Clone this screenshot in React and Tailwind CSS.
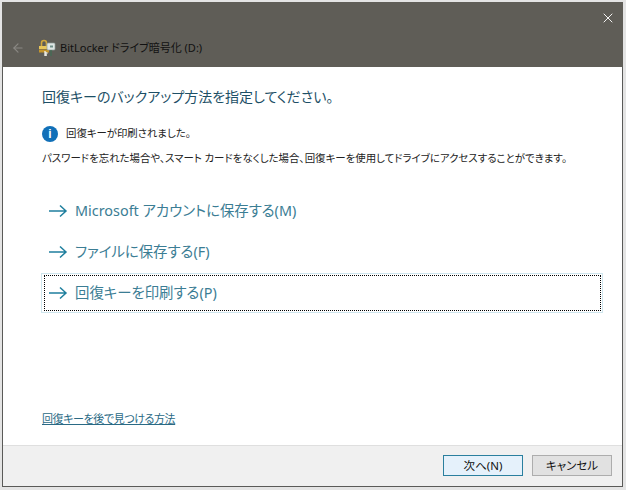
import { ArrowLeft, X } from "lucide-react";

const FONT = "font-['Noto_Sans','Noto_Sans_CJK_JP',sans-serif] [font-feature-settings:'palt']";

function LinkArrow() {
  return (
    <svg width="20" height="14" viewBox="0 0 20 14" className="shrink-0">
      <path d="M1 7h17M12 1.5 18 7l-6 5.5" fill="none" stroke="#1f7f9e" strokeWidth="1.5" />
    </svg>
  );
}

function CommandLink({ label, focused }) {
  return (
    <div className={"h-[40px] w-[562px] border pl-[2px] pr-[1px] py-[1px] " + (focused ? "border-[#cfe6ee]" : "border-transparent")}>
      <div className={"flex items-center h-full w-full pl-[3px] border " + (focused ? "border-dotted border-black" : "border-transparent")}>
        <LinkArrow />
        <span className="ml-[7px] text-[14.4px] text-[#3b7d94]">{label}</span>
      </div>
    </div>
  );
}

function KeyIcon() {
  return (
    <svg width="18" height="18" viewBox="0 0 18 18" className="shrink-0">
      <path d="M3.5 7V4a2.5 2.5 0 0 1 5 0v3" fill="none" stroke="#d2a83c" strokeWidth="1.6" />
      <rect x="1" y="7" width="10" height="3" fill="#e8c65a" />
      <rect x="1" y="10.5" width="10" height="3" fill="#c4952c" />
      <rect x="9" y="4" width="8" height="7" rx="1" fill="#dfe6e4" stroke="#8f9b98" strokeWidth="0.7" />
      <path d="M12 6.5h3v2h-3z" fill="#6f8f88" />
      <path d="M7 12v5M7 14h2.5M7 16h2" stroke="#f4f4f0" strokeWidth="1.3" />
      <path d="M13 11v6" stroke="#3f6f55" strokeWidth="1.2" />
    </svg>
  );
}

export default function App() {
  return (
    <div className={"w-[626px] h-[490px] bg-[#e4e4e4] pt-[2px] pl-[2px] overflow-hidden " + FONT}>
      <div className="flex flex-col w-[621px] h-[485px] border-x border-b border-[#5a5a58] bg-white">
        <div className="h-[65px] bg-[#5f5d57] flex flex-col shrink-0 -mx-px">
          <div className="flex justify-end pt-[8px] pr-[7px] h-[37px]">
            <X size={16} strokeWidth={1.4} className="text-white" />
          </div>
          <div className="flex items-center pl-[9px]">
            <ArrowLeft size={14} strokeWidth={2} className="text-[#8a8883]" />
            <div className="ml-[13px]"><KeyIcon /></div>
            <span className="ml-[4px] text-[11px] text-[#111]">BitLocker ドライブ暗号化 (D:)</span>
          </div>
        </div>

        <div className="flex-1 flex flex-col pl-[39px] pt-[19px]">
          <h1 className="text-[14px] leading-[22px] text-[#1d4f66] font-normal">回復キーのバックアップ方法を指定してください。</h1>
          <div className="flex items-center mt-[16px] h-[20px]">
            <span className="flex items-center justify-center w-[16px] h-[16px] rounded-full bg-[#1170b8] text-white text-[12px] font-bold leading-none font-['Liberation_Sans',sans-serif]">i</span>
            <span className="ml-[8px] text-[10.4px] text-[#222]">回復キーが印刷されました。</span>
          </div>
          <p className="mt-[6px] text-[10.45px] leading-[16px] text-[#222] whitespace-nowrap">パスワードを忘れた場合や、スマート カードをなくした場合、回復キーを使用してドライブにアクセスすることができます。</p>

          <div className="flex flex-col mt-[25px] gap-[1px] -ml-px">
            <CommandLink label="Microsoft アカウントに保存する(M)" />
            <CommandLink label="ファイルに保存する(F)" />
            <CommandLink label="回復キーを印刷する(P)" focused />
          </div>

          <a className="mt-auto mb-[18px] text-[11px] leading-[16px] tracking-[-0.4px] text-[#2a6a85] underline">回復キーを後で見つける方法</a>
        </div>

        <div className="h-[41px] shrink-0 bg-[#f0f0f0] border-t border-[#dfdfdf] flex justify-end items-start pt-[9px] pr-[10px] gap-[9px]">
          <button className="w-[80px] h-[21px] border border-[#2a7f9e] bg-[#e5f1fb] text-[11.5px] leading-none text-[#111]">次へ(N)</button>
          <button className="w-[80px] h-[21px] border border-[#adadad] bg-[#e1e1e1] text-[11.5px] leading-none text-[#111]">キャンセル</button>
        </div>
      </div>
    </div>
  );
}
